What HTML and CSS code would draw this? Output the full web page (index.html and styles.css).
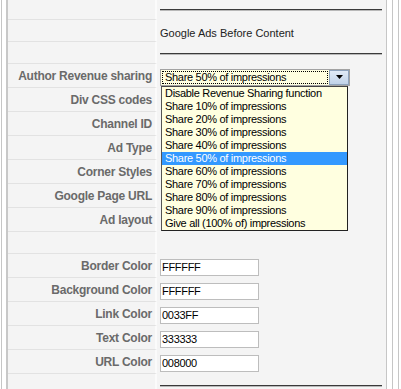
FILE: index.html
```html
<!DOCTYPE html>
<html lang="en">
<head>
    <meta charset="UTF-8">
    <title>Google Ads Options</title>
    <link rel="stylesheet" href="styles.css">
</head>
<body>
    <div class="frame">
        <div class="panel">
            <table class="options">
                <tr class="short"><th></th><td class="rule"><hr></td></tr>
                <tr class="short"><th></th><td class="heading">Google Ads Before Content</td></tr>
                <tr class="short"><th></th><td class="rule"><hr></td></tr>

                <!-- Revenue sharing with the list open -->
                <tr>
                    <th>Author Revenue sharing</th>
                    <td>
                        <div class="combo">
                            <div class="select">
                                <span class="select-value"><span class="focus">Share 50% of impressions</span></span>
                                <span class="select-button">
                                    <svg width="9" height="5" viewBox="0 0 9 5"><path d="M1 0h7L4.5 4z" fill="#000"/></svg>
                                </span>
                            </div>
                            <ul class="dropdown">
                                <li>Disable Revenue Sharing function</li>
                                <li>Share 10% of impressions</li>
                                <li>Share 20% of impressions</li>
                                <li>Share 30% of impressions</li>
                                <li>Share 40% of impressions</li>
                                <li class="selected">Share 50% of impressions</li>
                                <li>Share 60% of impressions</li>
                                <li>Share 70% of impressions</li>
                                <li>Share 80% of impressions</li>
                                <li>Share 90% of impressions</li>
                                <li>Give all (100% of) impressions</li>
                            </ul>
                        </div>
                    </td>
                </tr>
                <tr><th>Div CSS codes</th><td></td></tr>
                <tr><th>Channel ID</th><td></td></tr>
                <tr><th>Ad Type</th><td></td></tr>
                <tr><th>Corner Styles</th><td></td></tr>
                <tr><th>Google Page URL</th><td></td></tr>
                <tr><th>Ad layout</th><td></td></tr>
                <tr class="short"><th></th><td></td></tr>

                <!-- Colours -->
                <tr><th>Border Color</th><td><input type="text" class="color-input" value="FFFFFF"></td></tr>
                <tr><th>Background Color</th><td><input type="text" class="color-input" value="FFFFFF"></td></tr>
                <tr><th>Link Color</th><td><input type="text" class="color-input" value="0033FF"></td></tr>
                <tr><th>Text Color</th><td><input type="text" class="color-input" value="333333"></td></tr>
                <tr><th>URL Color</th><td><input type="text" class="color-input" value="008000"></td></tr>
                <tr class="short"><th></th><td class="rule"><hr></td></tr>
            </table>
        </div>
        <div class="gutter"></div>
    </div>
</body>
</html>
```

FILE: styles.css
```css
/* Options page */
body {
    margin: 0;
    background-color: #fff;
    font-family: "Liberation Sans", Arial, sans-serif;
    overflow: hidden;
}

.frame {
    display: flex;
    height: 389px;
    margin: 0 2px 0 1px;
    padding: 0 5px 0 4px;
    border-left: 1px solid #c6c6c6;
    border-right: 1px solid #c6c6c6;
}

.panel {
    flex: 1;
    background-color: #f4f4f4;
    border-left: 2px solid #c8c8c8;
    border-right: 1px solid #c6c6c6;
}

.gutter {
    width: 5px;
    border-right: 1px solid #c6c6c6;
}

.options {
    width: 100%;
    margin-top: -2px;
    border-collapse: separate;
    border-spacing: 0;
}

.options tr {
    height: 24px;
}

.options tr.short {
    height: 22px;
}

.options th {
    width: 144px;
    padding: 0 3px 0 0;
    border-bottom: 1px solid #e2e2e2;
    border-right: 2px solid #fbfbfb;
    text-align: right;
    font-size: 12px;
    font-weight: bold;
    letter-spacing: -0.25px;
    color: #6a6a6a;
    white-space: nowrap;
}

.options td {
    padding: 2px 4px 0 3px;
    font-size: 11px;
    color: #222;
}

.options td.rule {
    vertical-align: top;
    padding-top: 11px;
}

.options td.heading {
    padding-top: 4px;
}

hr {
    margin: 0;
    height: 0;
    border: none;
    border-top: 1px solid #3a3a3a;
    border-bottom: 1px solid #b8b8b8;
}

/* Select with open list */
.combo {
    position: relative;
    width: 190px;
}

.select {
    display: flex;
    height: 17px;
    box-sizing: border-box;
    border: 1px solid #a3a3a3;
    background-color: #ffffe0;
}

.select-value {
    flex: 1;
    display: flex;
    padding: 1px;
}

.focus {
    flex: 1;
    padding-left: 2px;
    border: 1px dotted #000;
    line-height: 11px;
    font-size: 11px;
    letter-spacing: -0.3px;
    color: #000;
}

.select-button {
    width: 18px;
    display: flex;
    align-items: center;
    justify-content: center;
    border: 1px solid #8ea3bd;
    background: linear-gradient(#e0eaf6, #c1d3e9);
}

.dropdown {
    position: absolute;
    top: 17px;
    left: 1px;
    width: 185px;
    margin: 0;
    padding: 0;
    list-style: none;
    background-color: #ffffe0;
    border: 1px solid #222;
    border-left-color: #555;
    border-top-color: #444;
}

.dropdown li {
    height: 13px;
    line-height: 13px;
    padding-left: 3px;
    font-size: 11px;
    letter-spacing: -0.3px;
    color: #000;
    white-space: nowrap;
}

.dropdown li.selected {
    background-color: #3399ff;
    color: #fff;
}

.color-input {
    display: block;
    width: 99px;
    height: 17px;
    box-sizing: border-box;
    margin: 0;
    padding: 0 1px;
    border: 1px solid #bdbdbd;
    background-color: #fff;
    font-family: "Liberation Sans", Arial, sans-serif;
    font-size: 11px;
    letter-spacing: -0.3px;
    color: #000;
}
```
